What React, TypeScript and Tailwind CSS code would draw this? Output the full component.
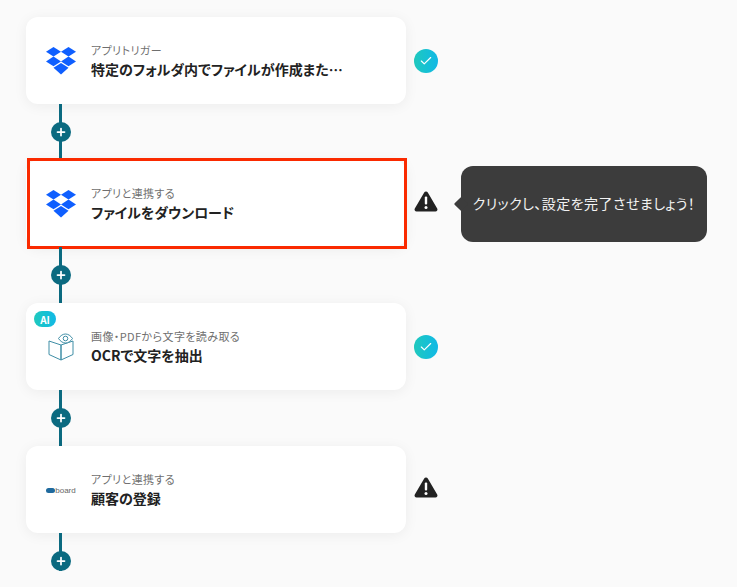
import type { ReactNode } from 'react';
import { Plus, Check } from 'lucide-react';

function DropboxLogo() {
  return (
    <svg viewBox="0 0 30 28" className="h-[28px] w-[30px]" fill="#0f5fff">
      <polygon points="7.5,0 15,4.8 7.5,9.6 0,4.8" />
      <polygon points="22.5,0 30,4.8 22.5,9.6 15,4.8" />
      <polygon points="7.5,9.6 15,14.4 7.5,19.2 0,14.4" />
      <polygon points="22.5,9.6 30,14.4 22.5,19.2 15,14.4" />
      <polygon points="15,16 22.5,20.8 15,27.6 7.5,20.8" />
    </svg>
  );
}

function OcrIcon() {
  return (
    <svg viewBox="0 0 26 28" className="h-[28px] w-[26px]" fill="none" stroke="#3f8ea6" strokeWidth="1">
      <path d="M1 8 L13 12 V27 L1 21.5 Z" />
      <path d="M25 8 L13 12 V27 L25 21.5 Z" />
      <path d="M10.5 5.5 C12.5 2.5 15 1 17.5 1 C20 1 22.5 2.5 24.5 5.5 C22.5 8.5 20 10 17.5 10 C15 10 12.5 8.5 10.5 5.5 Z" fill="#ffffff" />
      <circle cx="17.5" cy="5.5" r="2.3" />
    </svg>
  );
}

function BoardLogo() {
  return (
    <div className="mt-[2px] flex items-center">
      <span className="h-[5px] w-[9px] rounded-full bg-[#1f6a9e]" />
      <span className="text-[8px] leading-none font-light text-[#666] [font-family:'Liberation_Sans',sans-serif]">
        board
      </span>
    </div>
  );
}

function DoneBadge() {
  return (
    <div className="flex h-6 w-6 items-center justify-center rounded-full bg-gradient-to-r from-[#20c9bd] to-[#12b8e6]">
      <Check className="h-3.5 w-3.5 text-white" strokeWidth={2} />
    </div>
  );
}

function WarnBadge() {
  return (
    <svg viewBox="0 0 24 22" className="mb-[5px] h-[22px] w-6">
      <path d="M12 1.5 C12.8 1.5 13.4 1.9 13.8 2.6 L23.2 18.4 C24 19.8 23 21.4 21.4 21.4 H2.6 C1 21.4 0 19.8 0.8 18.4 L10.2 2.6 C10.6 1.9 11.2 1.5 12 1.5 Z" fill="#222222" />
      <rect x="10.8" y="6.5" width="2.4" height="8" rx="1" fill="#ffffff" />
      <circle cx="12" cy="17.4" r="1.5" fill="#ffffff" />
    </svg>
  );
}

function Connector({ short }: { short?: boolean }) {
  return (
    <div className={`relative ml-[33px] flex w-[3px] items-center justify-center bg-[#0b6a80] ${short ? 'h-[38px] items-end' : 'h-[56px]'}`}>
      <div className="flex h-5 w-5 shrink-0 items-center justify-center rounded-full bg-[#0b6a80]">
        <Plus className="h-3 w-3 text-white" strokeWidth={3.5} />
      </div>
    </div>
  );
}

type StepProps = {
  icon: ReactNode;
  label: string;
  title: string;
  status: ReactNode;
  ai?: boolean;
  selected?: boolean;
  children?: ReactNode;
};

function Step({ icon, label, title, status, ai, selected, children }: StepProps) {
  return (
    <div className="flex items-center">
      <div className="relative flex h-[87px] w-[380px] shrink-0 items-center rounded-xl bg-white shadow-[0_2px_14px_rgba(0,0,0,0.06)]">
        {ai && (
          <span className="absolute top-2 left-2 flex h-4 w-[22px] items-center justify-center rounded-lg bg-gradient-to-r from-[#20c9bd] to-[#12b8e6] text-[10px] font-bold text-white">
            AI
          </span>
        )}
        {selected && <span className="absolute -top-[2px] -right-[1px] -bottom-[2px] left-[1px] border-3 border-[#fa2a00]" />}
        <div className="flex w-[65px] shrink-0 justify-center pl-[5px]">{icon}</div>
        <div className="min-w-0 pb-[1px] [font-feature-settings:'palt']">
          <p className="text-[11px] leading-4 tracking-[0.4px] text-[#6f6f6f]">{label}</p>
          <p className="mt-[1px] w-[258px] truncate text-sm leading-5 font-bold text-[#222]">{title}</p>
        </div>
      </div>
      <div className="ml-[8px] flex w-6 shrink-0 justify-center">{status}</div>
      {children}
    </div>
  );
}

export default function App() {
  return (
    <div className="h-[587px] w-[737px] overflow-hidden bg-[#fafafa] pt-[17px] pl-[26px] [font-family:'Noto_Sans_CJK_JP','Noto_Sans',sans-serif]">
      <Step icon={<DropboxLogo />} label="アプリトリガー" title="特定のフォルダ内でファイルが作成または更新されたら" status={<DoneBadge />} />
      <Connector />
      <Step icon={<DropboxLogo />} label="アプリと連携する" title="ファイルをダウンロード" status={<WarnBadge />} selected>
        <div className="relative ml-[23px] flex h-[76px] w-[246px] items-center justify-center rounded-xl bg-[#3c3c3c] pb-[2px] text-sm tracking-[0.45px] text-[#f2f2f2] [font-feature-settings:'palt']">
          <span className="absolute top-[33px] -left-[5px] h-2.5 w-2.5 rotate-45 rounded-[1px] bg-[#3c3c3c]" />
          クリックし、設定を完了させましょう！
        </div>
      </Step>
      <Connector />
      <Step icon={<OcrIcon />} label="画像・PDFから文字を読み取る" title="OCRで文字を抽出" status={<DoneBadge />} ai />
      <Connector />
      <Step icon={<BoardLogo />} label="アプリと連携する" title="顧客の登録" status={<WarnBadge />} />
      <Connector short />
    </div>
  );
}
